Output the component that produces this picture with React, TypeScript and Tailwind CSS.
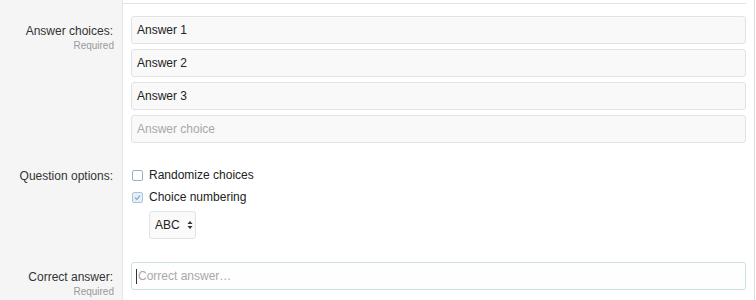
import React from "react";

const font = { fontFamily: '"Liberation Sans", Arial, sans-serif' };

const Label = ({ text, required, pt }: { text: string; required?: boolean; pt: string }) => (
  <div className={`w-[123px] shrink-0 bg-[#f5f5f5] border-r border-[#e6e6e6] pr-[8px] text-right ${pt}`}>
    <div className="text-[12px] leading-[16px] text-[#333] mr-[1px]">{text}</div>
    {required && <div className="text-[10px] leading-[12px] mt-[1px] text-[#9a9a9a]">Required</div>}
  </div>
);

const Box = ({ checked }: { checked?: boolean }) => (
  <span
    className={`w-[11px] h-[11px] rounded-[2px] border flex items-center justify-center ${
      checked ? "border-[#a9c6de] bg-[#e6eff7]" : "border-[#8fb3d3] bg-white"
    }`}
  >
    {checked && (
      <svg width="9" height="9" viewBox="0 0 9 9">
        <path d="M2 4.6 L3.8 6.4 L7 2.6" fill="none" stroke="#7fa6c8" strokeWidth="1.2" />
      </svg>
    )}
  </span>
);

export default function App() {
  const answers = ["Answer 1", "Answer 2", "Answer 3"];
  return (
    <div className="w-[756px] h-[300px] overflow-hidden bg-white" style={font}>
      <div className="w-[755px] h-full border-r border-[#dcdcdc] flex flex-col">
        {/* top strip */}
        <div className="flex h-[4px]">
          <div className="w-[123px] shrink-0 bg-[#f5f5f5] border-r border-[#e6e6e6]" />
          <div className="flex-1 pr-[8px]">
            <div className="h-[4px] border-b border-[#e4e4e4]" />
          </div>
        </div>

        {/* answer choices */}
        <div className="flex">
          <Label text="Answer choices:" required pt="pt-[19px]" />
          <div className="flex-1 pl-[8px] pr-[8px] pt-[12px] pb-[8px] flex flex-col gap-[5px]">
            {answers.map((a) => (
              <div
                key={a}
                className="h-[28px] rounded-[3px] border border-[#e2e2e2] bg-[#f9f9f9] px-[5px] flex items-center text-[12px] text-[#222]"
              >
                {a}
              </div>
            ))}
            <div className="h-[28px] rounded-[3px] border border-[#e2e2e2] bg-[#f9f9f9] px-[5px] flex items-center text-[12px] text-[#a8a8a8]">
              Answer choice
            </div>
          </div>
        </div>

        {/* question options */}
        <div className="flex">
          <Label text="Question options:" pt="pt-[17px]" />
          <div className="flex-1 pl-[9px] pt-[13px] pb-[11px] text-[12px] text-[#222]">
            <div className="h-[22px] flex items-center gap-[6px]">
              <Box />
              <span>Randomize choices</span>
            </div>
            <div className="h-[22px] flex items-center gap-[6px]">
              <Box checked />
              <span>Choice numbering</span>
            </div>
            <div className="mt-[3px] ml-[17px] w-[47px] h-[28px] rounded-[3px] border border-[#e2e2e2] bg-[#fafafa] flex items-center pl-[5px] gap-[7px]">
              <span>ABC</span>
              <svg width="6" height="10" viewBox="0 0 6 10">
                <path d="M3 1 L5.5 4 L0.5 4 Z" fill="#333" />
                <path d="M3 9 L5.5 6 L0.5 6 Z" fill="#333" />
              </svg>
            </div>
          </div>
        </div>

        {/* correct answer */}
        <div className="flex flex-1">
          <Label text="Correct answer:" required pt="pt-[19px]" />
          <div className="flex-1 pl-[8px] pr-[8px] pt-[12px]">
            <div className="h-[28px] rounded-[3px] border border-[#cfe0e3] bg-[#fefefe] pl-[4px] flex items-center text-[12px] text-[#a8a8a8]">
              <span className="w-px h-[15px] bg-[#333] mr-[1px]" />
              Correct answer…
            </div>
          </div>
        </div>
      </div>
    </div>
  );
}
